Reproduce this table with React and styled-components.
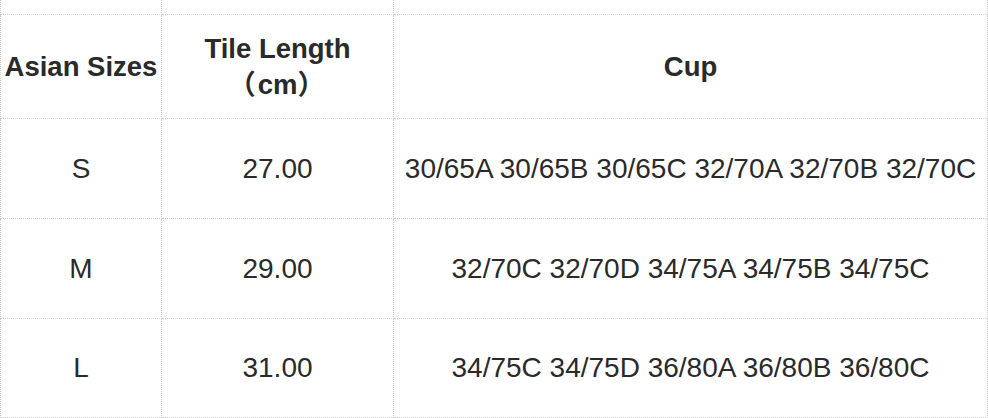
import React from "react";
import styled, { createGlobalStyle } from "styled-components";

const rows = [
  { size: "S", length: "27.00", cup: "30/65A 30/65B 30/65C 32/70A 32/70B 32/70C" },
  { size: "M", length: "29.00", cup: "32/70C 32/70D 34/75A 34/75B 34/75C" },
  { size: "L", length: "31.00", cup: "34/75C 34/75D 36/80A 36/80B 36/80C" },
];

const GlobalStyle = createGlobalStyle`
  html, body {
    margin: 0;
    padding: 0;
    background: #ffffff;
    overflow: hidden;
  }
  * {
    box-sizing: border-box;
  }
`;

const Table = styled.div`
  display: grid;
  grid-template-columns: 161px 232px 594px;
  grid-template-rows: 15px 104px 100px 100px 99px;
  margin-left: 1px;
  font-family: "Liberation Sans", "Noto Sans CJK SC", Arial, sans-serif;
  color: #2a2a2a;
`;

const Cell = styled.div`
  display: flex;
  flex-direction: column;
  justify-content: center;
  align-items: center;
  text-align: center;
  line-height: 36px;
  font-size: ${(props) => (props.head ? "27.5px" : "28px")};
  font-weight: ${(props) => (props.head ? 700 : 400)};
  border-right: 1px dotted #cccccc;
  border-bottom: 1px dotted #cccccc;
  border-left: ${(props) => (props.first ? "1px dotted #cccccc" : "none")};
  margin-left: ${(props) => (props.first ? "-1px" : "0")};
  white-space: nowrap;
`;

const HeadLine = styled.span`
  display: block;
`;

const Paren = styled.span`
  letter-spacing: 2px;
`;

export default function App() {
  return (
    <>
      <GlobalStyle />
      <Table>
        {/* cropped row above the header */}
        <Cell first />
        <Cell />
        <Cell />

        <Cell head first>
          Asian Sizes
        </Cell>
        <Cell head>
          <HeadLine>Tile Length</HeadLine>
          <HeadLine>
            <Paren>（</Paren>cm<Paren>）</Paren>
          </HeadLine>
        </Cell>
        <Cell head>Cup</Cell>

        {rows.map((row) => (
          <React.Fragment key={row.size}>
            <Cell first>{row.size}</Cell>
            <Cell>{row.length}</Cell>
            <Cell>{row.cup}</Cell>
          </React.Fragment>
        ))}
      </Table>
    </>
  );
}
